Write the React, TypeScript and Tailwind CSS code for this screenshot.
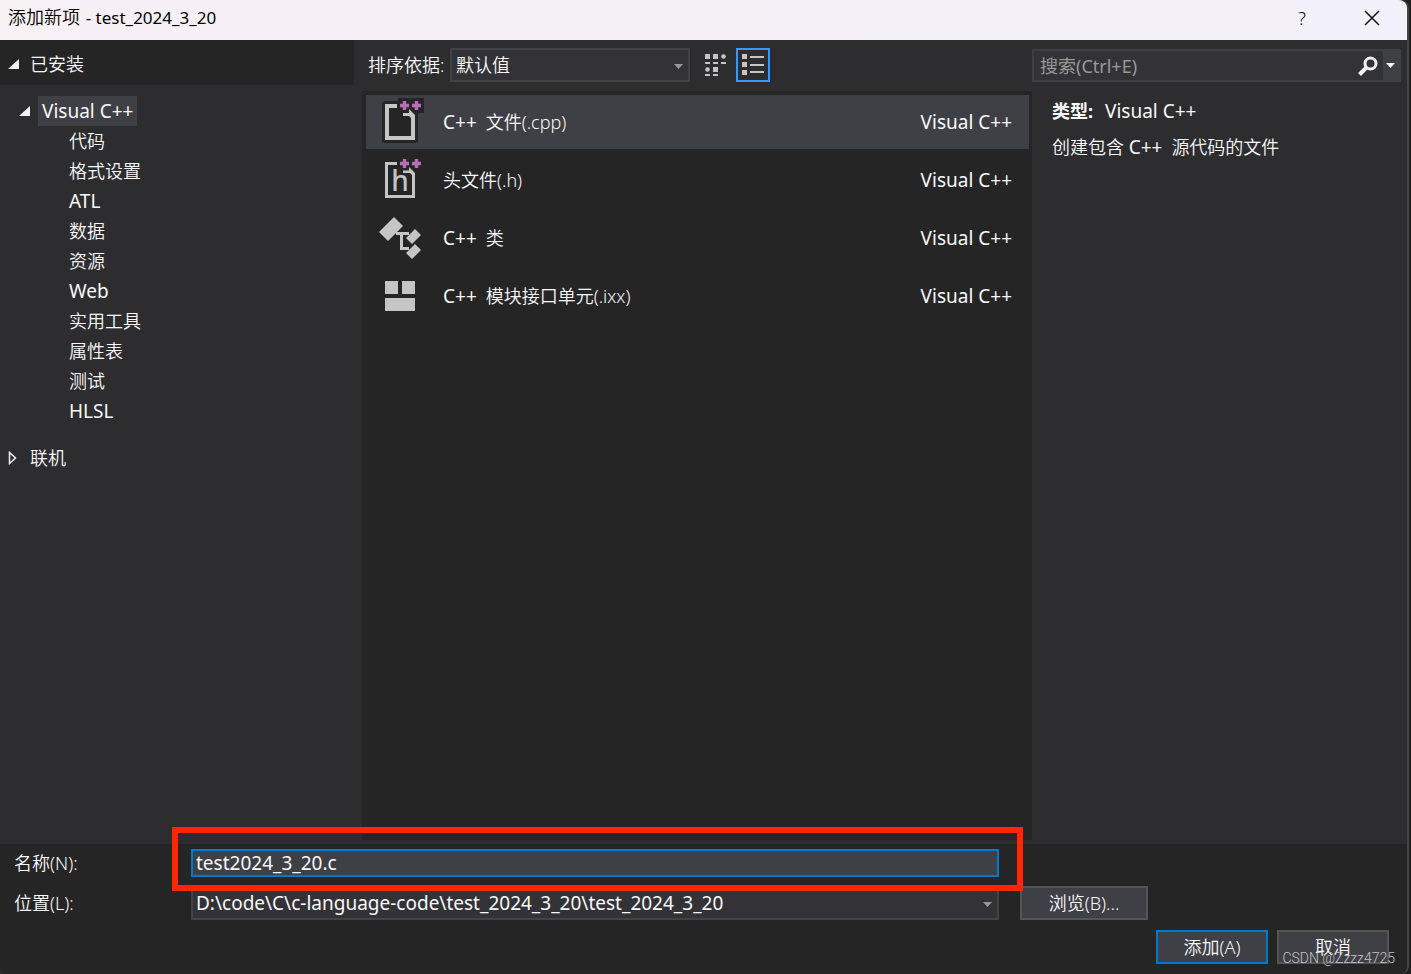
import React, { useState } from 'react';

const categories = ['代码', '格式设置', 'ATL', '数据', '资源', 'Web', '实用工具', '属性表', '测试', 'HLSL'];

const isLatin = (s: string) => /^[A-Za-z]+$/.test(s);

const PlusPlus = () => (
  <path d="M22 7.5h9M26.5 3v9M34 7.5h9M38.5 3v9" stroke="#b86fb8" strokeWidth="3.4" />
);

const CppFileIcon = () => (
  <svg width="48" height="48" viewBox="0 0 48 48" fill="none" aria-hidden="true">
    <path d="M6 3h14V0h26v15h-6v28l-2 2H6l-2-2V5z" fill="#252526" />
    <path d="M19 8H9v32h26V18" stroke="#c5c5c5" strokeWidth="4" />
    <path d="M25 15h6v-4l6 6v3h-4l-2-2h-6z" fill="#c5c5c5" />
    <PlusPlus />
  </svg>
);

const HeaderFileIcon = () => (
  <svg width="48" height="48" viewBox="0 0 48 48" fill="none" aria-hidden="true">
    <path d="M19 7.5H8.5v33h27V17" stroke="#c5c5c5" strokeWidth="3" />
    <path d="M25 14.5h6V11l6 6v2h-3l-2-2h-7z" fill="#c5c5c5" />
    <text x="22" y="35" textAnchor="middle" fill="#c5c5c5" fontSize="28" fontWeight="500">h</text>
    <PlusPlus />
  </svg>
);

const ClassIcon = () => (
  <svg width="48" height="48" viewBox="0 0 48 48" fill="none" aria-hidden="true">
    <path d="M1 18 16 3l9 9-15 15z" fill="#c5c5c5" />
    <path d="M18 19.500h13M23.500 19.500v15H31" stroke="#c5c5c5" strokeWidth="3" />
    <path d="M37 15l6 6-9 9-6-6zM37 30l6 6-9 9-6-6z" fill="#c5c5c5" />
  </svg>
);

const ModuleIcon = () => (
  <svg width="48" height="48" viewBox="0 0 48 48" aria-hidden="true">
    <path d="M7 9h13v13H7zM24 9h13v13H24zM7 26h30v13H7z" fill="#c5c5c5" />
  </svg>
);

const templates = [
  { prefix: 'C++', name: '文件(.cpp)', Icon: CppFileIcon },
  { prefix: '', name: '头文件(.h)', Icon: HeaderFileIcon },
  { prefix: 'C++', name: '类', Icon: ClassIcon },
  { prefix: 'C++', name: '模块接口单元(.ixx)', Icon: ModuleIcon },
];

const Expanded = () => (
  <svg width="12" height="12" viewBox="0 0 12 12" className="shrink-0" aria-hidden="true">
    <path d="M11 1v10H0z" fill="#f1f1f1" />
  </svg>
);

const Caret = ({ className }: { className: string }) => (
  <svg width="10" height="6" viewBox="0 0 10 6" className={className} aria-hidden="true">
    <path d="M0 0h9L4.5 5z" fill="currentColor" />
  </svg>
);

const TitleBar = () => (
  <header className="flex h-10 shrink-0 items-center rounded-tr-lg bg-linear-to-r from-[#f7f0f5] to-[#f2f0f8] pl-2 pb-[5px] text-black">
    <h1 className="flex-1">添加新项 <span className="ml-px text-[17px] font-normal">- test_2024_3_20</span></h1>
    <button type="button" className="w-[70px]" aria-label="帮助">?</button>
    <button type="button" className="flex h-8 w-[70px] items-center justify-center" aria-label="关闭">
      <svg width="16" height="16" viewBox="0 0 16 16" aria-hidden="true">
        <path d="M1 1l14 14M15 1L1 15" stroke="#111" strokeWidth="1.5" />
      </svg>
    </button>
  </header>
);

const Sidebar = () => (
  <nav className="w-[362px] shrink-0">
    <button type="button" className="flex h-[45px] w-[354px] items-center gap-[10px] bg-[#252526] pl-2 pt-[3px]">
      <Expanded />
      已安装
    </button>
    <button type="button" className="mt-[11px] ml-[19px] flex h-[30px] items-center gap-[7px]">
      <Expanded />
      <span className="bg-[#3f3f46] px-1 text-[19px] leading-[30px] font-normal">Visual C++</span>
    </button>
    <ul className="pl-[69px]">
      {categories.map((c) => (
        <li key={c} className="h-[30px] leading-[30px]">
          <button type="button" className={isLatin(c) ? 'text-[19px] font-normal' : ''}>{c}</button>
        </li>
      ))}
    </ul>
    <button type="button" className="mt-[17px] flex h-[30px] items-center gap-[13px] pl-2">
      <svg width="9" height="14" viewBox="0 0 9 14" fill="none" aria-hidden="true">
        <path d="M1.5 1.5v11L7.5 7z" stroke="#f1f1f1" strokeWidth="1.5" />
      </svg>
      联机
    </button>
  </nav>
);

const Toolbar = () => (
  <div className="flex h-[51px] items-center pl-[6px] pb-px">
    <label htmlFor="sort" className="w-[82px] whitespace-nowrap">排序依据:</label>
    <div className="relative">
      <select id="sort" className="block h-[34px] w-[240px] appearance-none border-2 border-[#434346] bg-[#333337] pl-1 outline-none">
        <option>默认值</option>
      </select>
      <Caret className="pointer-events-none absolute right-[6px] top-[16px] text-[#999]" />
    </div>
    <button type="button" aria-label="小图标" className="ml-[10px] flex h-[34px] w-[30px] items-center justify-center">
      <svg width="22" height="24" viewBox="0 0 22 24" fill="#c5c5c5" aria-hidden="true">
        <path d="M1 1h5v5H1zM9 1h5v5H9zM9 14h5v5H9zM1 9h5v2H1zM9 9h5v2H9zM17 9h5v2h-5zM1 21h5v2H1zM9 21h5v2H9z" />
        <circle cx="19.500" cy="3.500" r="2.300" />
        <circle cx="3.500" cy="16.500" r="2.300" />
      </svg>
    </button>
    <button type="button" aria-label="列表" className="ml-[6px] flex h-[34px] w-[34px] items-center justify-center border-2 border-[#3399ff]">
      <svg width="24" height="22" viewBox="0 0 24 22" fill="#c5c5c5" aria-hidden="true">
        <path d="M1 0h5v5H1zM1 8h5v5H1zM1 16h5v5H1zM9 2h14v2H9zM9 10h14v2H9zM9 17h14v2H9z" />
      </svg>
    </button>
  </div>
);

const TemplateList = () => {
  const [selected, setSelected] = useState(0);

  return (
    <ul className="mb-1 flex flex-1 flex-col gap-1 bg-[#252526] p-1 pr-[3px]">
      {templates.map(({ prefix, name, Icon }, i) => (
        <li key={name}>
          <button
            type="button"
            onClick={() => setSelected(i)}
            className={`flex h-[54px] w-full items-center pl-3 pr-[17px] text-left ${i === selected ? 'bg-[#3f3f46]' : ''}`}
          >
            <Icon />
            <span className="ml-[17px] flex-1">
              {prefix && <span className="mr-1 text-[19px] font-normal">{prefix} </span>}
              {name}
            </span>
            <span className="text-[19px] font-normal">Visual C++</span>
          </button>
        </li>
      ))}
    </ul>
  );
};

const Details = () => (
  <aside className="w-[375px] shrink-0 pt-[9px] pr-[6px]">
    <div className="flex h-[33px] items-center border-2 border-[#3f3f46] bg-[#333337]">
      <input
        type="search"
        aria-label="搜索"
        placeholder="搜索(Ctrl+E)"
        className="min-w-0 flex-1 bg-transparent pl-[6px] font-normal outline-none placeholder:text-[#999]"
      />
      <button type="button" aria-label="搜索" className="pr-[5px] pl-1">
        <svg width="20" height="20" viewBox="0 0 20 20" fill="none" aria-hidden="true">
          <circle cx="12.500" cy="7.500" r="5.500" stroke="#f1f1f1" strokeWidth="3" />
          <path d="M8.500 11.500L1.500 18.500" stroke="#f1f1f1" strokeWidth="4" />
        </svg>
      </button>
      <button type="button" aria-label="搜索选项" className="flex h-full w-4 items-center justify-center bg-[#3f3f46]">
        <Caret className="text-[#f1f1f1]" />
      </button>
    </div>
    <div className="flex flex-col gap-[6px] pl-5 pt-[14px] leading-[30px]">
      <p><b className="mr-3 font-bold">类型:</b><span className="text-[19px] font-normal">Visual C++</span></p>
      <p>创建包含 <span className="mr-1 text-[19px] font-normal">C++ </span>源代码的文件</p>
    </div>
  </aside>
);

const Footer = () => {
  const [name, setName] = useState('test2024_3_20.c');

  return (
    <footer className="shrink-0 rounded-b-lg bg-[#252526] pt-[5px] pr-[18px] pb-[10px] pl-[14px]">
      <div className="grid grid-cols-[177px_1fr_128px] items-center gap-y-[9px] pr-[241px]">
        <label htmlFor="name">名称(N):</label>
        <div className="relative mr-[21px]">
          <input
            id="name"
            value={name}
            onChange={(e) => setName(e.target.value)}
            className="block h-7 w-full border-2 border-[#007acc] bg-[#3f3f46] px-[3px] text-[19px] font-normal outline-none"
          />
          {/* highlight frame */}
          <div className="pointer-events-none absolute -top-[22px] -right-6 -bottom-[14px] -left-[19px] z-10 border-6 border-[#ff2600]" />
        </div>
        <span />

        <label htmlFor="location">位置(L):</label>
        <div className="relative mr-[21px]">
          <select id="location" className="block h-[34px] w-full appearance-none border-2 border-[#434346] bg-[#333337] px-[3px] text-[19px] font-normal outline-none">
            <option>D:\code\C\c-language-code\test_2024_3_20\test_2024_3_20</option>
          </select>
          <Caret className="pointer-events-none absolute right-[6px] top-[16px] text-[#999]" />
        </div>
        <button type="button" className="h-[34px] border-2 border-[#555] bg-[#3f3f46]">浏览(B)...</button>
      </div>
      <div className="mt-[10px] flex justify-end gap-[9px]">
        <button type="button" className="h-[34px] w-28 border-2 border-[#007acc] bg-[#3f3f46]">添加(A)</button>
        <button type="button" className="h-[34px] w-28 border-2 border-[#555] bg-[#3f3f46]">取消</button>
      </div>
    </footer>
  );
};

const App: React.FC = () => (
  <div className="relative flex min-h-screen flex-col bg-[#1f1f20] pr-[2px] font-['Noto_Sans','Noto_Sans_CJK_SC',sans-serif] text-[18px] leading-[26px] font-[350] text-[#f8f8f8]">
    <div className="flex flex-1 flex-col rounded-r-lg border-r-2 border-[#454548] bg-[#2d2d30]">
      <TitleBar />
      <div className="flex flex-1">
        <Sidebar />
        <main className="flex min-w-0 flex-1 flex-col">
          <Toolbar />
          <TemplateList />
        </main>
        <Details />
      </div>
      <Footer />
    </div>
    <div className="pointer-events-none absolute right-4 bottom-1 font-['Roboto',sans-serif] text-[14px] leading-6 font-light text-[#c4c4c4]">CSDN @Zzzz4725</div>
  </div>
);

export default App;
